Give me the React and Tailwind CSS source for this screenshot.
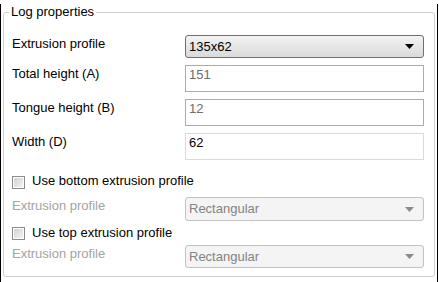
import React from "react";

const font = { fontFamily: '"Liberation Sans", Arial, sans-serif' };

function Arrow({ color }) {
  return (
    <svg width="9" height="5" viewBox="0 0 9 5" className="shrink-0">
      <path d="M0 0H9L4.5 5Z" fill={color} />
    </svg>
  );
}

function Checkbox() {
  return (
    <div className="w-[13px] h-[13px] border border-[#8c8c8c] bg-white p-[1px] shrink-0">
      <div className="w-full h-full bg-gradient-to-br from-[#d3d3d3] to-[#f2f2f2]" />
    </div>
  );
}

function Label({ children, disabled }) {
  return (
    <div
      className={`w-[173px] text-[13px] leading-4 mt-[1px] ${disabled ? "text-[#a3a3a3]" : "text-black"}`}
    >
      {children}
    </div>
  );
}

function Input({ value, muted, light }) {
  return (
    <div
      className={`w-[239px] h-[27px] border bg-white px-[3px] pt-[1px] text-[13px] leading-4 ${
        light ? "border-[#d6dbe1]" : "border-[#ababab]"
      } ${muted ? "text-[#6d6d6d]" : "text-black"}`}
    >
      {value}
    </div>
  );
}

export default function App() {
  return (
    <div className="w-[439px] h-[282px] bg-white" style={font}>
      <div className="w-[438px] h-[281px] border-l border-r border-b border-black pl-[2px] pr-[1px]">
        <fieldset className="mt-[4px] w-[432px] h-[273px] border border-[#d0d0d0] rounded-[3px]">
          <legend className="ml-[5px] px-[2px] text-[13px] leading-4 text-black">Log properties</legend>
          <div className="flex flex-col pl-[8px]">
            <div className="flex items-start mt-[15px]">
              <Label>Extrusion profile</Label>
              <div className="w-[239px] h-[23px] rounded-[3px] border border-[#707070] bg-gradient-to-b from-[#f3f3f3] to-[#dadada] flex items-center justify-between pl-[3px] pr-[9px] text-[13px] leading-4 text-black">
                <span>135x62</span>
                <Arrow color="#000" />
              </div>
            </div>
            <div className="flex items-start mt-[7px]">
              <Label>Total height (A)</Label>
              <Input value="151" muted />
            </div>
            <div className="flex items-start mt-[7px]">
              <Label>Tongue height (B)</Label>
              <Input value="12" muted />
            </div>
            <div className="flex items-start mt-[7px]">
              <Label>Width (D)</Label>
              <Input value="62" light />
            </div>
            <div className="flex items-start mt-[13px] h-4">
              <div className="mt-[3px]">
                <Checkbox />
              </div>
              <span className="ml-[7px] text-[13px] leading-4 text-black">Use bottom extrusion profile</span>
            </div>
            <div className="flex items-start mt-[8px]">
              <Label disabled>Extrusion profile</Label>
              <div className="w-[239px] h-[24px] rounded-[3px] border border-[#c2c2c2] bg-[#f4f4f4] flex items-center justify-between pl-[3px] pr-[9px] text-[13px] leading-4 text-[#838383]">
                <span>Rectangular</span>
                <Arrow color="#8a8a8a" />
              </div>
            </div>
            <div className="flex items-start mt-[4px] h-4">
              <div className="mt-[2px]">
                <Checkbox />
              </div>
              <span className="ml-[7px] text-[13px] leading-4 text-black">Use top extrusion profile</span>
            </div>
            <div className="flex items-start mt-[4px]">
              <Label disabled>Extrusion profile</Label>
              <div className="w-[239px] h-[23px] rounded-[3px] border border-[#c2c2c2] bg-[#f4f4f4] flex items-center justify-between pl-[3px] pr-[9px] text-[13px] leading-4 text-[#838383]">
                <span>Rectangular</span>
                <Arrow color="#8a8a8a" />
              </div>
            </div>
          </div>
        </fieldset>
      </div>
    </div>
  );
}
